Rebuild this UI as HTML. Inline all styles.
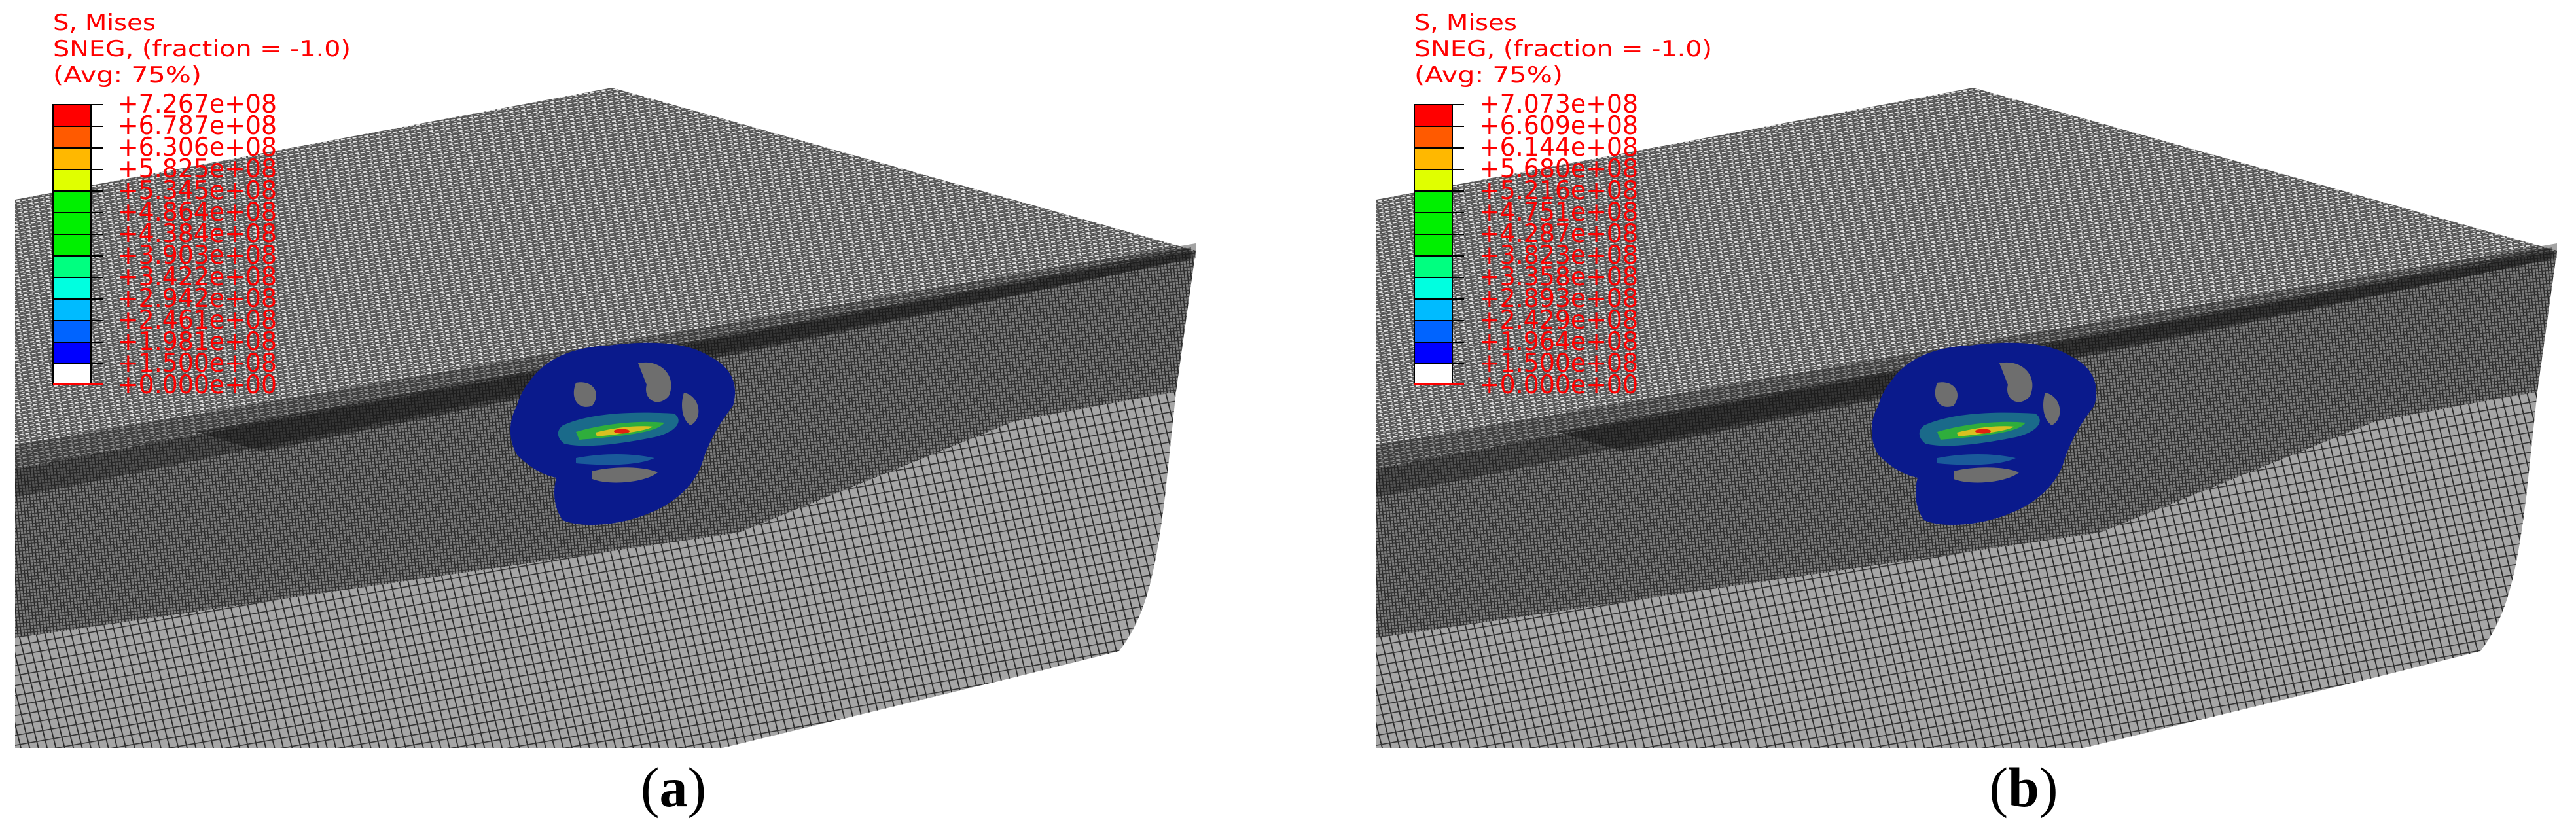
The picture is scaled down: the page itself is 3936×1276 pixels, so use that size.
<!DOCTYPE html>
<html><head><meta charset="utf-8"><style>
html,body{margin:0;padding:0;background:#fff;width:3936px;height:1276px;overflow:hidden}
svg{display:block}
.t{font-family:"DejaVu Sans","Liberation Sans",sans-serif;fill:#ff0000}
.c{font-family:"Liberation Serif",serif;fill:#000}
</style></head><body>
<svg width="3936" height="1276" viewBox="0 0 3936 1276" xmlns="http://www.w3.org/2000/svg">
<defs>
<pattern id="top" width="9" height="6" patternUnits="userSpaceOnUse" patternTransform="rotate(-8)">
<rect width="9" height="6" fill="#555"/>
<rect x="0" y="1" width="6" height="2" fill="#e4e4e4"/>
<rect x="4" y="4" width="4" height="1.2" fill="#c4c4c4"/>
</pattern>
<pattern id="dense" width="5" height="5" patternUnits="userSpaceOnUse" patternTransform="rotate(-6)">
<rect width="5" height="5" fill="#7e7e7e"/>
<rect x="0" y="0" width="1.6" height="5" fill="#252525"/>
<rect x="0" y="0" width="5" height="1.4" fill="#333"/>
</pattern>
<pattern id="coarse" width="13" height="15" patternUnits="userSpaceOnUse" patternTransform="rotate(-10) skewX(4)">
<rect width="13" height="15" fill="#a6a6a6"/>
<rect x="0" y="0" width="1.8" height="15" fill="#262626"/>
<rect x="0" y="0" width="13" height="1.6" fill="#333"/>
</pattern>
<g id="box">
<polygon points="23,305 935,134 1827,383 23,716" fill="url(#top)"/>
<polygon points="23,716 1827,383 1797,598 1550,644 1129,814 23,975" fill="url(#dense)"/>
<path d="M23,975 L1129,814 L1550,644 L1797,598 L1780,759 C1765,880 1750,943 1710,995 L1550,1035 L1104,1143 L23,1143 Z" fill="url(#coarse)"/>
<polygon points="23,680 1827,372 1827,395 1000,560 23,760" fill="#1a1a1a" opacity="0.4"/>
<polygon points="300,660 1500,440 1820,378 1820,395 1300,505 400,690" fill="#111" opacity="0.45"/>
<g>
<path d="M815,575 C840,545 880,530 930,528 C990,520 1050,522 1085,545 C1115,560 1130,585 1120,620 C1105,640 1090,660 1075,700 C1065,740 1030,770 990,785 C950,802 890,808 860,795 C845,775 845,750 850,730 C825,725 805,710 790,695 C775,670 778,640 790,620 C795,600 805,588 815,575 Z" fill="#0a1a8c"/>
<path d="M975,555 C1010,548 1035,575 1022,605 C1005,625 982,610 988,588 Z" fill="#6e6e6e"/>
<path d="M880,585 C905,580 920,600 905,620 C885,628 870,610 880,585 Z" fill="#6e6e6e"/>
<path d="M905,720 C935,712 985,712 1005,722 C985,738 930,742 905,732 Z" fill="#6e6e6e"/>
<path d="M1045,600 C1070,605 1075,640 1055,650 C1040,640 1040,615 1045,600 Z" fill="#6e6e6e"/>
<path d="M860,650 C900,632 960,628 1030,632 C1045,642 1035,660 1000,668 C950,678 895,686 862,678 C850,668 850,658 860,650 Z" fill="#1a6a8a"/>
<path d="M880,660 C920,648 975,642 1015,646 C1005,660 960,666 885,672 Z" fill="#2fae3c"/>
<path d="M910,661 C945,652 975,650 998,652 C985,659 950,663 912,667 Z" fill="#d8c020"/>
<ellipse cx="950" cy="659" rx="12" ry="3.5" fill="#e02010"/>
<path d="M880,700 C920,692 965,692 1000,700 C975,712 920,712 880,708 Z" fill="#1a5a9a"/>
</g>
</g>
<g id="leg">
<g stroke="#000" stroke-width="2">
<rect x="81" y="160" width="58" height="33" fill="#ff0000"/>
<rect x="81" y="193" width="58" height="33" fill="#ff5a00"/>
<rect x="81" y="226" width="58" height="33" fill="#ffb800"/>
<rect x="81" y="259" width="58" height="33" fill="#e0ff00"/>
<rect x="81" y="292" width="58" height="33" fill="#00f000"/>
<rect x="81" y="325" width="58" height="33" fill="#00f000"/>
<rect x="81" y="358" width="58" height="33" fill="#00f000"/>
<rect x="81" y="391" width="58" height="33" fill="#00ff80"/>
<rect x="81" y="424" width="58" height="33" fill="#00ffe0"/>
<rect x="81" y="457" width="58" height="33" fill="#00bbff"/>
<rect x="81" y="490" width="58" height="33" fill="#0064ff"/>
<rect x="81" y="523" width="58" height="33" fill="#0000ff"/>
<rect x="81" y="556" width="58" height="31" fill="#ffffff"/>
<path d="M139,160H157M139,193H157M139,226H157M139,259H157M139,292H157M139,325H157M139,358H157M139,391H157M139,424H157M139,457H157M139,490H157M139,523H157M139,556H157"/>
</g>
<path d="M81,587H157" stroke="#ff0000" stroke-width="2"/>
<text class="t" x="81" y="46" font-size="34" textLength="157" lengthAdjust="spacingAndGlyphs">S, Mises</text>
<text class="t" x="81" y="86" font-size="34" textLength="455" lengthAdjust="spacingAndGlyphs">SNEG, (fraction = -1.0)</text>
<text class="t" x="81" y="126" font-size="34" textLength="227" lengthAdjust="spacingAndGlyphs">(Avg: 75%)</text>
</g>
</defs>

<use href="#box"/>
<use href="#leg"/>
<g class="t" font-size="39">
<text x="180" y="172" textLength="243" lengthAdjust="spacingAndGlyphs">+7.267e+08</text>
<text x="180" y="205" textLength="243" lengthAdjust="spacingAndGlyphs">+6.787e+08</text>
<text x="180" y="238" textLength="243" lengthAdjust="spacingAndGlyphs">+6.306e+08</text>
<text x="180" y="271" textLength="243" lengthAdjust="spacingAndGlyphs">+5.825e+08</text>
<text x="180" y="304" textLength="243" lengthAdjust="spacingAndGlyphs">+5.345e+08</text>
<text x="180" y="337" textLength="243" lengthAdjust="spacingAndGlyphs">+4.864e+08</text>
<text x="180" y="370" textLength="243" lengthAdjust="spacingAndGlyphs">+4.384e+08</text>
<text x="180" y="403" textLength="243" lengthAdjust="spacingAndGlyphs">+3.903e+08</text>
<text x="180" y="436" textLength="243" lengthAdjust="spacingAndGlyphs">+3.422e+08</text>
<text x="180" y="469" textLength="243" lengthAdjust="spacingAndGlyphs">+2.942e+08</text>
<text x="180" y="502" textLength="243" lengthAdjust="spacingAndGlyphs">+2.461e+08</text>
<text x="180" y="535" textLength="243" lengthAdjust="spacingAndGlyphs">+1.981e+08</text>
<text x="180" y="568" textLength="243" lengthAdjust="spacingAndGlyphs">+1.500e+08</text>
<text x="180" y="601" textLength="243" lengthAdjust="spacingAndGlyphs">+0.000e+00</text>
</g>
<text class="c" x="1029" y="1232" font-size="86" text-anchor="middle">(<tspan font-weight="bold">a</tspan>)</text>

<g transform="translate(2080,0)">
<use href="#box"/>
<use href="#leg"/>
<g class="t" font-size="39">
<text x="180" y="172" textLength="243" lengthAdjust="spacingAndGlyphs">+7.073e+08</text>
<text x="180" y="205" textLength="243" lengthAdjust="spacingAndGlyphs">+6.609e+08</text>
<text x="180" y="238" textLength="243" lengthAdjust="spacingAndGlyphs">+6.144e+08</text>
<text x="180" y="271" textLength="243" lengthAdjust="spacingAndGlyphs">+5.680e+08</text>
<text x="180" y="304" textLength="243" lengthAdjust="spacingAndGlyphs">+5.216e+08</text>
<text x="180" y="337" textLength="243" lengthAdjust="spacingAndGlyphs">+4.751e+08</text>
<text x="180" y="370" textLength="243" lengthAdjust="spacingAndGlyphs">+4.287e+08</text>
<text x="180" y="403" textLength="243" lengthAdjust="spacingAndGlyphs">+3.823e+08</text>
<text x="180" y="436" textLength="243" lengthAdjust="spacingAndGlyphs">+3.358e+08</text>
<text x="180" y="469" textLength="243" lengthAdjust="spacingAndGlyphs">+2.893e+08</text>
<text x="180" y="502" textLength="243" lengthAdjust="spacingAndGlyphs">+2.429e+08</text>
<text x="180" y="535" textLength="243" lengthAdjust="spacingAndGlyphs">+1.964e+08</text>
<text x="180" y="568" textLength="243" lengthAdjust="spacingAndGlyphs">+1.500e+08</text>
<text x="180" y="601" textLength="243" lengthAdjust="spacingAndGlyphs">+0.000e+00</text>
</g>
<text class="c" x="1012" y="1232" font-size="86" text-anchor="middle">(<tspan font-weight="bold">b</tspan>)</text>
</g>
</svg>
</body></html>
